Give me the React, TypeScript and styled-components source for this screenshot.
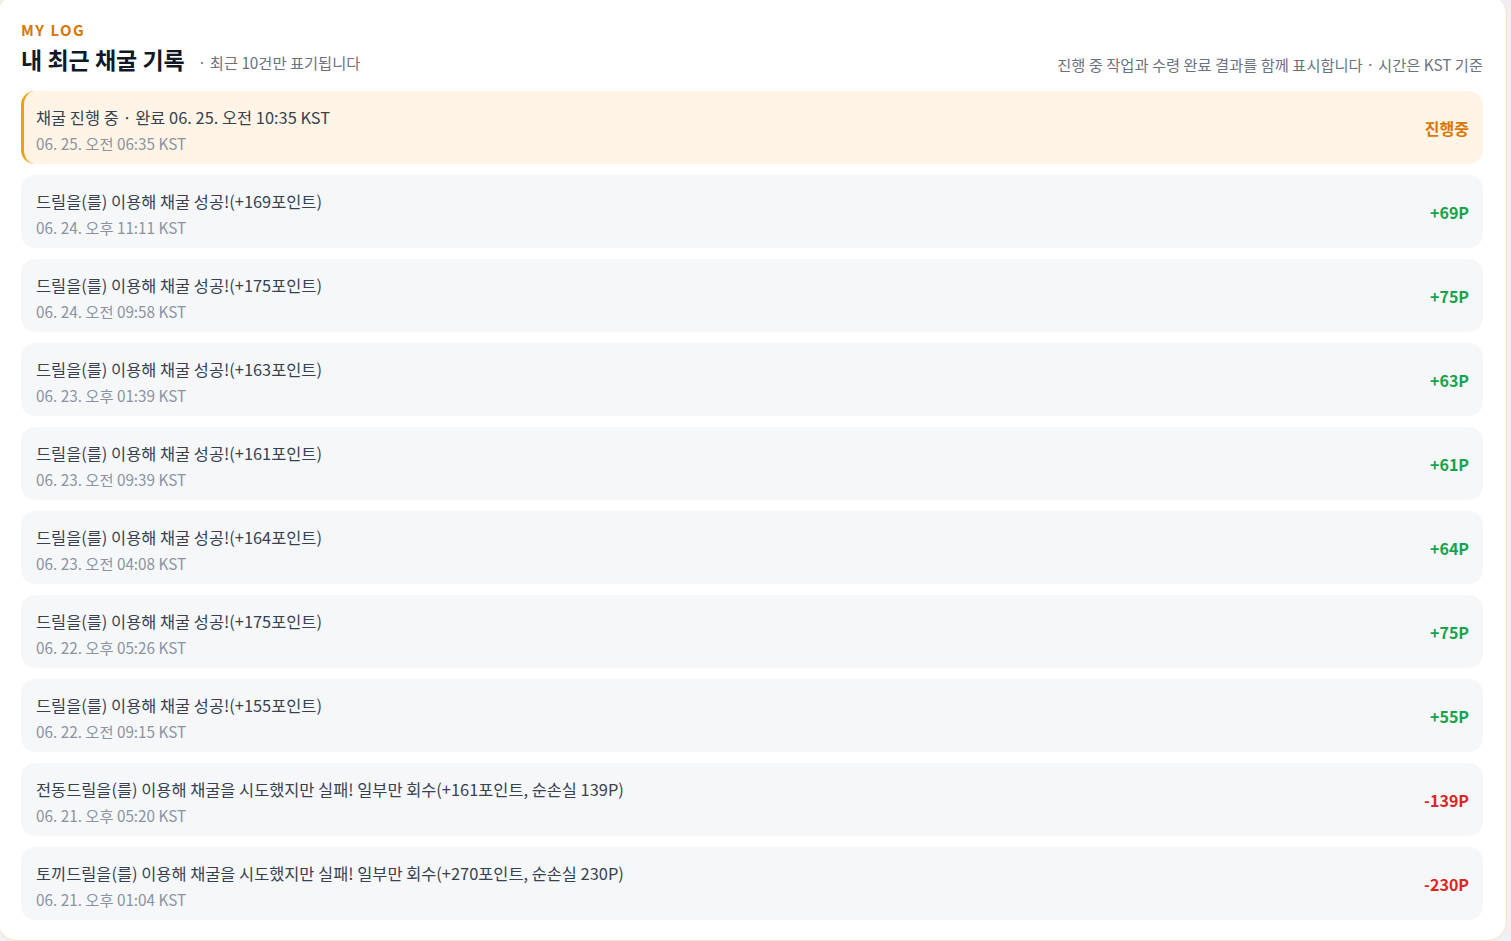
import React from 'react';
import styled, { createGlobalStyle } from 'styled-components';

type LogKind = 'pending' | 'gain' | 'loss';

interface MiningLog {
  id: number;
  message: string;
  time: string;
  value: string;
  kind: LogKind;
}

const logs: MiningLog[] = [
  { id: 1, message: '채굴 진행 중 · 완료 06. 25. 오전 10:35 KST', time: '06. 25. 오전 06:35 KST', value: '진행중', kind: 'pending' },
  { id: 2, message: '드릴을(를) 이용해 채굴 성공!(+169포인트)', time: '06. 24. 오후 11:11 KST', value: '+69P', kind: 'gain' },
  { id: 3, message: '드릴을(를) 이용해 채굴 성공!(+175포인트)', time: '06. 24. 오전 09:58 KST', value: '+75P', kind: 'gain' },
  { id: 4, message: '드릴을(를) 이용해 채굴 성공!(+163포인트)', time: '06. 23. 오후 01:39 KST', value: '+63P', kind: 'gain' },
  { id: 5, message: '드릴을(를) 이용해 채굴 성공!(+161포인트)', time: '06. 23. 오전 09:39 KST', value: '+61P', kind: 'gain' },
  { id: 6, message: '드릴을(를) 이용해 채굴 성공!(+164포인트)', time: '06. 23. 오전 04:08 KST', value: '+64P', kind: 'gain' },
  { id: 7, message: '드릴을(를) 이용해 채굴 성공!(+175포인트)', time: '06. 22. 오후 05:26 KST', value: '+75P', kind: 'gain' },
  { id: 8, message: '드릴을(를) 이용해 채굴 성공!(+155포인트)', time: '06. 22. 오전 09:15 KST', value: '+55P', kind: 'gain' },
  { id: 9, message: '전동드릴을(를) 이용해 채굴을 시도했지만 실패! 일부만 회수(+161포인트, 순손실 139P)', time: '06. 21. 오후 05:20 KST', value: '-139P', kind: 'loss' },
  { id: 10, message: '토끼드릴을(를) 이용해 채굴을 시도했지만 실패! 일부만 회수(+270포인트, 순손실 230P)', time: '06. 21. 오후 01:04 KST', value: '-230P', kind: 'loss' },
];

const valueColor: Record<LogKind, string> = {
  pending: '#d97706',
  gain: '#16a34a',
  loss: '#dc2626',
};

const GlobalStyle = createGlobalStyle`
  * { box-sizing: border-box; }
  html, body {
    margin: 0;
    padding: 0;
    background: #eef0f4;
    font-family: "Noto Sans CJK KR", "Noto Sans", sans-serif;
    overflow: hidden;
  }
`;

const Panel = styled.section`
  width: 1510px;
  margin: -6px 0 0 -3px;
  padding: 25px 23px 20px;
  background: #ffffff;
  border: 1px solid #fbe2bd;
  border-radius: 20px;
`;

const Header = styled.header`
  display: flex;
  justify-content: space-between;
  align-items: flex-end;
  margin-bottom: 15px;
`;

const Eyebrow = styled.p`
  margin: 0 0 3px;
  font-size: 15px;
  line-height: 20px;
  font-weight: 700;
  letter-spacing: 1.5px;
  color: #d97706;
`;

const TitleRow = styled.div`
  display: flex;
  align-items: baseline;
  gap: 13px;
`;

const Title = styled.h2`
  margin: 0;
  font-size: 23px;
  line-height: 33px;
  font-weight: 700;
  color: #111827;
`;

const Hint = styled.span`
  font-size: 15.3px;
  color: #6b7280;
`;

const Note = styled.span`
  font-size: 15.3px;
  line-height: 22px;
  color: #6b7280;
  padding-bottom: 1px;
`;

const List = styled.ul`
  list-style: none;
  margin: 0;
  padding: 0;
  display: flex;
  flex-direction: column;
  gap: 11px;
`;

const Row = styled.li<{ $active: boolean }>`
  display: flex;
  align-items: center;
  justify-content: space-between;
  height: 73px;
  padding: 0 14px 0 ${(p) => (p.$active ? '12px' : '15px')};
  border-radius: 14px;
  background: ${(p) => (p.$active ? '#fff4e5' : '#f6f7f9')};
  border-left: ${(p) => (p.$active ? '3px solid #f59e0b' : 'none')};
`;

const Body = styled.div`
  display: flex;
  flex-direction: column;
  gap: 4px;
  margin-top: 4px;
`;

const Message = styled.span`
  font-size: 16.4px;
  line-height: 24px;
  color: #374151;
`;

const Time = styled.span`
  font-size: 15.3px;
  line-height: 21px;
  color: #8b93a1;
`;

const Value = styled.span<{ $kind: LogKind }>`
  font-size: 16px;
  font-weight: 700;
  color: ${(p) => valueColor[p.$kind]};
`;

export default function App() {
  return (
    <>
      <GlobalStyle />
      <Panel>
        <Header>
          <div>
            <Eyebrow>MY LOG</Eyebrow>
            <TitleRow>
              <Title>내 최근 채굴 기록</Title>
              <Hint>· 최근 10건만 표기됩니다</Hint>
            </TitleRow>
          </div>
          <Note>진행 중 작업과 수령 완료 결과를 함께 표시합니다 · 시간은 KST 기준</Note>
        </Header>
        <List>
          {logs.map((log) => (
            <Row key={log.id} $active={log.kind === 'pending'}>
              <Body>
                <Message>{log.message}</Message>
                <Time>{log.time}</Time>
              </Body>
              <Value $kind={log.kind}>{log.value}</Value>
            </Row>
          ))}
        </List>
      </Panel>
    </>
  );
}
